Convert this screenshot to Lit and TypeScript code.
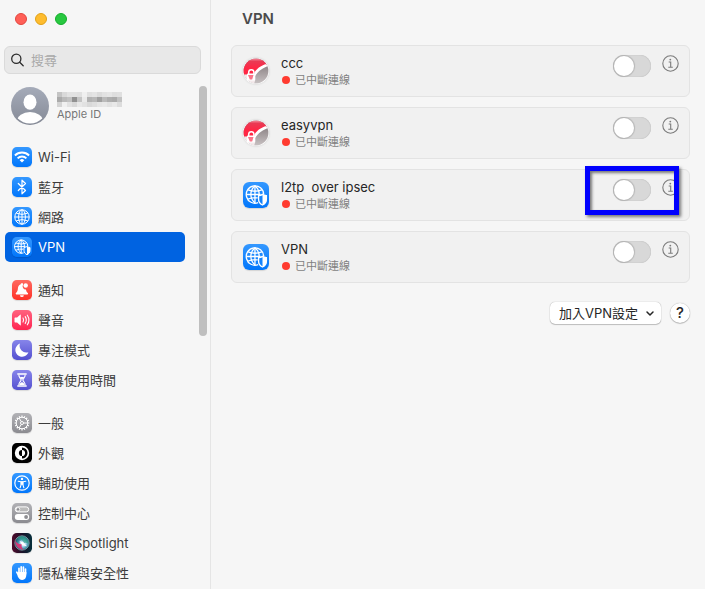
import { LitElement, html, svg, css, nothing, TemplateResult } from "lit";
import { customElement, property, state } from "lit/decorators.js";
import { classMap } from "lit/directives/class-map.js";
import { styleMap } from "lit/directives/style-map.js";

const globe = svg`
  <g fill="none" stroke="#fff" stroke-width="1">
    <circle cx="10" cy="10" r="7.2"/>
    <ellipse cx="10" cy="10" rx="3.4" ry="7.2"/>
    <path d="M10 2.8v14.4M2.8 10h14.4M4.3 6.2q5.7 2.4 11.4 0M4.3 13.8q5.7-2.4 11.4 0"/>
  </g>`;

const vpnGlobe = svg`
  <g fill="none" stroke="#fff" stroke-width="1">
    <path d="M11.6 15.9A6.7 6.7 0 1 1 15.9 9.4"/>
    <path d="M9.2 2.8v13.4M2.5 9.6h11M3.9 6q5.3 2.2 10.6 0M3.9 13.2q3.6-1.6 7.4-1"/>
    <path d="M9.2 2.8c-4.2 3.6-4.2 9.8 0 13.4M9.2 2.8c2.2 1.800 3.300 4.300 3.200 6.800"/>
  </g>
  <path d="M15 9.500c1 .7 2 .9 3 1v3c0 2-1.300 3.400-3 4.200-1.700-.8-3-2.200-3-4.200v-3c1-.1 2-.3 3-1z"
    fill="#1583fb" stroke="#fff" stroke-width="1"/>
  <path d="M15 9.600c1 .7 2 .9 3 1v2.900c0 2-1.300 3.400-3 4.200z" fill="#fff"/>`;

const gearTeeth = Array.from({ length: 16 }, (_, i) => i * 22.5);

const glyphs: Record<string, TemplateResult> = {
  wifi: svg`
    <g fill="none" stroke="#fff" stroke-width="1.9">
      <path d="M2.9 8.500a10 10 0 0 1 14.2 0"/>
      <path d="M5.6 11.300a6.200 6.200 0 0 1 8.800 0"/>
    </g>
    <path d="M10 15.600l-2.300-2.400a3.300 3.300 0 0 1 4.600 0z" fill="#fff"/>`,
  bluetooth: svg`<path d="M6.300 6.500l7.200 7L10 16.800V3.200l3.500 3.300-7.200 7" fill="none" stroke="#fff" stroke-width="1.2" stroke-linejoin="round" stroke-linecap="round"/>`,
  network: globe,
  vpn: vpnGlobe,
  bell: svg`
    <path d="M9.600 3.200a1 1 0 0 0-.9 1C6.600 4.800 6 6.600 5.900 8.600c-.1 2.500-.9 3.400-2 4.500-.5.500-.2 1.300.5 1.300h11c.7 0 1-.8.5-1.300-1-1-1.700-1.700-1.900-3.600a3.200 3.200 0 0 1-2.900-4.900A1.100 1.100 0 0 0 9.600 3.200z" fill="#fff"/>
    <path d="M8 15.200h3.800a1.900 1.900 0 0 1-3.800 0z" fill="#fff"/>
    <circle cx="13.700" cy="5.500" r="2.200" fill="#fff"/>`,
  sound: svg`
    <path d="M2.500 8.200q0-.7.7-.7h1.900l3-2.700q.7-.6.700.4v9.600q0 1-.7.4l-3-2.700H3.200q-.7 0-.7-.7z" fill="#fff"/>
    <g fill="none" stroke="#fff" stroke-width="1.100" stroke-linecap="round">
      <path d="M11 8q1.200 2 0 4M13.200 6.600q2.200 3.400 0 6.800M15.300 5.200q3.300 4.800 0 9.600"/>
    </g>`,
  moon: svg`<path d="M8 3.600a6.700 6.700 0 1 0 8.400 8.600A6.700 6.700 0 0 1 8 3.600z" fill="#fff"/>`,
  hourglass: svg`
    <path d="M5.300 3.200h9.400v1.600h-9.400zM5.300 15.200h9.400v1.600h-9.400z" fill="#fff"/>
    <path d="M6.800 4.800c0 3 2.300 3.700 2.300 5.200s-2.300 2.200-2.300 5.200M13.200 4.800c0 3-2.300 3.700-2.300 5.200s2.300 2.200 2.300 5.200" fill="none" stroke="#fff" stroke-width="1.100"/>
    <path d="M7.800 7h4.400L10 9.700zM7.300 15c.2-1.600 1.300-2 2.700-3 1.400 1 2.500 1.400 2.700 3z" fill="#fff"/>`,
  gear: svg`
    <g stroke="#fff" stroke-width="1.200">
      ${gearTeeth.map((a) => svg`<path d="M10 2.600v1.800" transform="rotate(${a} 10 10)"/>`)}
    </g>
    <g fill="none" stroke="#fff" stroke-width="1">
      <circle cx="10" cy="10" r="5.800"/>
      <circle cx="10" cy="10" r="1.500"/>
      <path d="M11.500 10h4.200M9.300 8.700L7.100 5M9.300 11.300L7.100 15"/>
    </g>`,
  appearance: svg`
    <circle cx="10" cy="10" r="7.200" fill="#fff"/>
    <path d="M10 4.500a5.500 5.500 0 0 1 0 11z" fill="#000"/>
    <path d="M10 6.900a3.100 3.100 0 0 0 0 6.200z" fill="#000"/>
    <path d="M10 6.900a3.100 3.100 0 0 1 0 6.200z" fill="#fff"/>`,
  accessibility: svg`
    <circle cx="10" cy="10" r="7.200" fill="none" stroke="#fff" stroke-width="1.200"/>
    <circle cx="10" cy="5.900" r="1.200" fill="#fff"/>
    <path d="M6.200 8.200l2.600.5h2.400l2.600-.5M9.200 9v2.300l-1.100 3.500M10.800 9v2.300l1.100 3.500" fill="none" stroke="#fff" stroke-width="1.100" stroke-linecap="round"/>
    <path d="M8.600 8.500h2.800v3.200H8.600z" fill="#fff"/>`,
  control: svg`
    <rect x="3.300" y="3.900" width="13.400" height="5" rx="2.500" fill="#bbb" stroke="#fff" stroke-width="1"/>
    <circle cx="6" cy="6.400" r="1.800" fill="#8e8e92" stroke="#fff" stroke-width=".8"/>
    <rect x="2.800" y="11" width="14.400" height="5.900" rx="2.900" fill="#fff"/>
    <circle cx="14.100" cy="14" r="1.900" fill="#8e8e92"/>`,
  siri: svg`
    <defs>
      <radialGradient id="orb" cx=".58" cy=".55" r=".55">
        <stop offset="0" stop-color="#fff"/><stop offset=".3" stop-color="#b9dcf5"/>
        <stop offset=".65" stop-color="#3d8fa5"/><stop offset="1" stop-color="#1f5a6a"/>
      </radialGradient>
    </defs>
    <circle cx="10" cy="10" r="7.200" fill="url(#orb)" stroke="#86a5ad" stroke-width=".8"/>
    <path d="M3.200 7.500C3.200 13 6.500 16.800 12 16.800c-2-1.500-3-3.300-2.200-5.600C7 11.500 5 10.500 3.200 7.500z" fill="#d23a78"/>
    <path d="M5 5.800c3-.6 5.400.6 7.200 4.200 1.700-.4 3-.1 4.500 1-.4-4.500-3-7.500-7-7.800C7.600 3.300 6 4.200 5 5.800z" fill="#2f9c86" opacity=".7"/>
    <path d="M7.500 8l3.500 1.300 4 3.900-4.700-1z" fill="#fff"/>`,
  hand: svg`
    <g stroke="#fff" stroke-width="1.700" stroke-linecap="round" fill="none">
      <path d="M7 10V5.300M9.200 9V3.900M11.400 9V4.200M13.500 10.500V6"/>
      <path d="M4.800 9.200l2 3.600"/>
    </g>
    <path d="M6.150 9h8.200v2.600c0 3.300-1.400 5.400-4.100 5.400-2.300 0-3.500-1.300-4.600-3.700z" fill="#fff"/>`,
};

@customElement("app-glyph")
class AppGlyph extends LitElement {
  @property() name = "vpn";
  @property() tint = "blue";

  static styles = css`
    :host { display: block; flex: none; width: 20px; height: 20px; }
    :host([large]) { width: 26px; height: 26px; }
    .tile { display: block; width: 100%; height: 100%; border-radius: 24%; box-shadow: 0 1px 1px #0000001f; }
    .blue { background: linear-gradient(#3498ff, #0176fb); }
    .red { background: linear-gradient(#ff6960, #ff3127); }
    .pink { background: linear-gradient(#ff6480, #ff2450); }
    .purple { background: linear-gradient(#8785ea, #5450d0); }
    .gray { background: linear-gradient(#b2b2b6, #8b8b90); }
    .black { background: #000; }
    .siri { background: linear-gradient(90deg, #500a2b, #171329 55%, #07303c); }
  `;

  render() {
    return html`<svg class="tile ${this.tint}" viewBox="0 0 20 20" aria-hidden="true">${glyphs[this.name]}</svg>`;
  }
}

@customElement("vpn-orb")
class VpnOrb extends LitElement {
  static styles = css`
    :host { display: block; flex: none; width: 26px; height: 26px; }
    svg { display: block; filter: drop-shadow(0 0 1px #00000026); }
  `;

  render() {
    return html`<svg width="26" height="26" viewBox="0 0 26 26" aria-hidden="true">
      <defs>
        <linearGradient id="top" x2="0" y2="1"><stop offset="0" stop-color="#f7a0ae"/><stop offset=".2" stop-color="#e93a54"/><stop offset=".6" stop-color="#ff2644"/></linearGradient>
        <linearGradient id="low" x2="0" y2="1"><stop offset=".3" stop-color="#8e8587"/><stop offset="1" stop-color="#c9c3c4"/></linearGradient>
        <clipPath id="ball"><circle cx="13" cy="13" r="12.400"/></clipPath>
      </defs>
      <circle cx="13" cy="13" r="13" fill="#fff"/>
      <g clip-path="url(#ball)">
        <path d="M0 0h26v26H0z" fill="url(#low)"/>
        <path d="M0 0h26v7C19 8 15 12 12 16.500L0 17z" fill="url(#top)"/>
        <path d="M26 5.600c-6.500 1-11 3.900-14.500 8.600V19C15.500 12.500 20 9.300 26 7.900z" fill="#fff"/>
        <path d="M0 16.500h5V22h7.300l-1.300 4H0z" fill="#f3e9eb"/>
      </g>
      <path d="M5.700 16v-1.700a2.600 2.600 0 0 1 5.200 0V16" fill="none" stroke="#fff" stroke-width="1.500"/>
      <rect x="4" y="15.400" width="8.300" height="7" rx=".8" fill="#fff"/>
      <path d="M5 17h5.500l-1.300 4.500H6.800z" fill="#fb7589"/>
    </svg>`;
  }
}

interface NavEntry { id: string; label: string; icon: string; tint: string; }

const groups: NavEntry[][] = [
  [
    { id: "wifi", label: "Wi-Fi", icon: "wifi", tint: "blue" },
    { id: "bluetooth", label: "藍牙", icon: "bluetooth", tint: "blue" },
    { id: "network", label: "網路", icon: "network", tint: "blue" },
    { id: "vpn", label: "VPN", icon: "vpn", tint: "blue" },
  ],
  [
    { id: "notify", label: "通知", icon: "bell", tint: "red" },
    { id: "sound", label: "聲音", icon: "sound", tint: "pink" },
    { id: "focus", label: "專注模式", icon: "moon", tint: "purple" },
    { id: "screentime", label: "螢幕使用時間", icon: "hourglass", tint: "purple" },
  ],
  [
    { id: "general", label: "一般", icon: "gear", tint: "gray" },
    { id: "appearance", label: "外觀", icon: "appearance", tint: "black" },
    { id: "accessibility", label: "輔助使用", icon: "accessibility", tint: "blue" },
    { id: "control", label: "控制中心", icon: "control", tint: "gray" },
    { id: "siri", label: "Siri與Spotlight", icon: "siri", tint: "siri" },
    { id: "privacy", label: "隱私權與安全性", icon: "hand", tint: "blue" },
  ],
];

interface Connection { name: string; orb: boolean; marked?: boolean; }

const connections: Connection[] = [
  { name: "ccc", orb: true },
  { name: "easyvpn", orb: true },
  { name: "l2tp  over ipsec", orb: false, marked: true },
  { name: "VPN", orb: false },
];

/* Grey levels of the obscured account name, row by row. */
const mosaic = [
  [196, 217, 226, 226, 224, 240, 224, 228, 219, 226, 229, 222, 224],
  [170, 186, 194, 145, 196, 234, 178, 184, 160, 186, 174, 170, 194],
  [212, 240, 226, 217, 232, 226, 217, 222, 229, 232, 226, 232, 220],
];

@customElement("app-root")
class AppRoot extends LitElement {
  @state() private selected = "vpn";

  static styles = css`
    :host {
      display: grid;
      grid-template-columns: 210px minmax(0, 1fr);
      height: 100vh;
      overflow: hidden;
      background: #f6f6f6;
      color: #3c3c3c;
      font: 13px/16px Inter, "Noto Sans CJK TC", sans-serif;
      text-autospace: normal;
    }
    * { box-sizing: border-box; }
    button, input, select { font: inherit; color: inherit; margin: 0; }
    .sidebar { display: flex; flex-direction: column; min-height: 0; }
    .lights { display: flex; gap: 8px; padding: 13px 15px; }
    .light { width: 12px; height: 12px; padding: 0; border: 1px solid; border-radius: 50%; }
    .close { background: #ff5f57; border-color: #e2463f; }
    .minimise { background: #febc2e; border-color: #e1a116; }
    .zoom { background: #28c840; border-color: #14ae2b; }
    .search {
      display: flex; align-items: center; gap: 6px; flex: none;
      height: 28px; margin: 8px 9px 0 4px; padding: 0 6px;
      border: 1px solid #dadada; border-radius: 6px; background: #e8e8e8;
    }
    .search input { flex: 1; min-width: 0; padding: 0; border: 0; outline: 0; background: none; }
    .search input::placeholder { color: #a9a9a9; opacity: 1; }
    .scroller { display: flex; flex: 1; min-height: 0; overflow: hidden; padding: 12px 3px 0 5px; }
    .list { flex: 1; min-width: 0; padding-right: 14px; }
    .thumb { flex: none; width: 8px; height: 250px; border-radius: 4px; background: #bfbfbf; }
    .account { display: flex; align-items: center; gap: 8px; height: 40px; padding-left: 6px; margin-bottom: 16px; }
    .account svg { display: block; flex: none; }
    .who { display: flex; flex-direction: column; gap: 0; font-size: 11px; line-height: 14px; color: #777; }
    nav { display: flex; flex-direction: column; gap: 13px; }
    .group { display: flex; flex-direction: column; }
    .entry {
      display: flex; align-items: center; gap: 6px; height: 30px; padding: 0 7px;
      border-radius: 5px; color: inherit; text-decoration: none; white-space: nowrap;
    }
    .current { background: #0063e1; color: #fff; }
    main { border-left: 1px solid #e5e5e5; padding: 0 15px 0 20px; min-width: 0; }
    h1 { margin: 0; padding: 9px 11px 16px; font-size: 15px; line-height: 20px; font-weight: 600; color: #4b4b4b; }
    .cards { display: flex; flex-direction: column; gap: 10px; margin: 0; padding: 0; list-style: none; }
    .card {
      position: relative; display: flex; align-items: center; gap: 12px; height: 52px; padding: 0 10px 0 11px;
      border: 1px solid #e3e3e3; border-radius: 6px; background: #f1f1f1;
    }
    .text { flex: 1; min-width: 0; display: flex; flex-direction: column; gap: 1px; }
    .name { color: #262626; white-space: pre; }
    .status { display: flex; align-items: center; gap: 5px; padding-left: 1px; font-size: 11px; color: #7f7f7f; }
    .dot { width: 8px; height: 8px; border-radius: 50%; background: #ff3b30; }
    .actions { display: flex; align-items: center; align-self: flex-start; gap: 11px; padding-top: 9px; }
    .switch {
      appearance: none; display: flex; align-items: center; width: 38px; height: 22px; padding: 0;
      border-radius: 11px; background: #d8d8d8; box-shadow: inset 0 0 1px #0000004d;
    }
    .switch::before { content: ""; width: 20px; height: 20px; margin: 0 1px; border-radius: 50%; background: #fff; box-shadow: 0 0 1px 1px #00000026; }
    .switch:checked { background: #0a7aff; justify-content: flex-end; }
    .info { display: block; align-self: flex-start; padding: 0; border: 0; background: none; color: #7b7b7b; }
    .info svg { display: block; }
    .marker { position: absolute; top: -4px; right: 10px; width: 94px; height: 49px; border: 5px solid #0000fe; box-shadow: 2px 2px 3px #00000080, inset 2px 2px 3px #00000080; pointer-events: none; }
    .foot { display: flex; justify-content: flex-end; align-items: center; gap: 9px; margin-top: 19px; }
    .menu { display: flex; align-items: center; position: relative; }
    .menu select {
      appearance: none; height: 22px; padding: 0 22px 0 9px; border: 0; border-radius: 5px;
      background: #fff; color: #262626; box-shadow: 0 0 1px #00000066, 0 1px 1px #00000033;
    }
    .menu svg { position: absolute; right: 6px; pointer-events: none; }
    .help { width: 20px; height: 20px; padding: 0; border: 0; border-radius: 50%; background: #fff; color: #262626; font-size: 15px; font-weight: 500; line-height: 20px; box-shadow: 0 0 1px #00000066, 0 1px 1px #00000033; }
  `;

  private pick(event: Event, id: string) {
    event.preventDefault();
    this.selected = id;
  }

  private renderEntry(entry: NavEntry) {
    const current = entry.id === this.selected;
    return html`<a class=${classMap({ entry: true, current })} href="#${entry.id}"
      aria-current=${current ? "page" : nothing}
      @click=${(e: Event) => this.pick(e, entry.id)}>
      <app-glyph name=${entry.icon} tint=${entry.tint}></app-glyph><span>${entry.label}</span>
    </a>`;
  }

  private renderCard(item: Connection) {
    return html`<li class="card">
      ${item.orb ? html`<vpn-orb></vpn-orb>` : html`<app-glyph large name="vpn" tint="blue"></app-glyph>`}
      <div class="text">
        <span class="name">${item.name}</span>
        <span class="status"><span class="dot"></span>已中斷連線</span>
      </div>
      <div class="actions">
        <input class="switch" type="checkbox" role="switch" aria-label=${item.name}>
        <button class="info" aria-label="${item.name} info">
          <svg width="17" height="17" viewBox="0 0 17 17" fill="none" stroke="currentColor">
            <circle cx="8.500" cy="8.500" r="7.700" stroke-width="1.100"/>
            <path d="M6.700 7h2v5.200M6.300 12.300h4.500" stroke-width="1.100"/>
            <circle cx="8.300" cy="4.600" r=".9" fill="currentColor" stroke="none"/>
          </svg>
        </button>
      </div>
      ${item.marked ? html`<div class="marker"></div>` : nothing}
    </li>`;
  }

  render() {
    return html`
      <aside class="sidebar">
        <div class="lights">
          <button class="light close" aria-label="Close"></button>
          <button class="light minimise" aria-label="Minimise"></button>
          <button class="light zoom" aria-label="Zoom"></button>
        </div>
        <label class="search">
          <svg width="14" height="14" viewBox="0 0 14 14" fill="none" stroke="#2c2c2c" stroke-width="1.300" stroke-linecap="round" aria-hidden="true">
            <circle cx="5.300" cy="5.800" r="4.600"/><path d="M8.700 9.200l3.500 3.500"/>
          </svg>
          <input type="text" placeholder="搜尋" aria-label="搜尋">
        </label>
        <div class="scroller">
          <div class="list">
            <div class="account">
              <svg width="38" height="38" viewBox="0 0 38 38" aria-hidden="true">
                <defs>
                  <linearGradient id="av" x2="0" y2="1"><stop offset="0" stop-color="#a5abb9"/><stop offset="1" stop-color="#858a96"/></linearGradient>
                  <clipPath id="disc"><circle cx="19" cy="19" r="17.500"/></clipPath>
                </defs>
                <circle cx="19" cy="19" r="19" fill="url(#av)"/>
                <ellipse cx="19" cy="15.200" rx="6.500" ry="7.600" fill="#fff"/>
                <ellipse cx="19" cy="34" rx="13" ry="9" fill="#fff" clip-path="url(#disc)"/>
              </svg>
              <div class="who">
                <svg width="65" height="15" viewBox="0 0 13 3" shape-rendering="crispEdges" aria-hidden="true">
                  ${mosaic.map((row, y) => row.map((v, x) =>
                    svg`<rect x=${x} y=${y} width="1" height="1" style=${styleMap({ fill: `rgb(${v},${v},${v})` })}/>`))}
                </svg>
                <span>Apple ID</span>
              </div>
            </div>
            <nav>${groups.map((g) => html`<div class="group">${g.map((e) => this.renderEntry(e))}</div>`)}</nav>
          </div>
          <div class="thumb"></div>
        </div>
      </aside>
      <main>
        <h1>VPN</h1>
        <ul class="cards">${connections.map((c) => this.renderCard(c))}</ul>
        <div class="foot">
          <div class="menu">
            <select aria-label="加入VPN設定"><option>加入VPN設定</option></select>
            <svg width="10" height="10" viewBox="0 0 10 10" fill="none" stroke="#262626" stroke-width="1.500" stroke-linecap="round" stroke-linejoin="round" aria-hidden="true"><path d="M2 4l3 3 3-3"/></svg>
          </div>
          <button class="help" aria-label="Help">?</button>
        </div>
      </main>`;
  }
}
